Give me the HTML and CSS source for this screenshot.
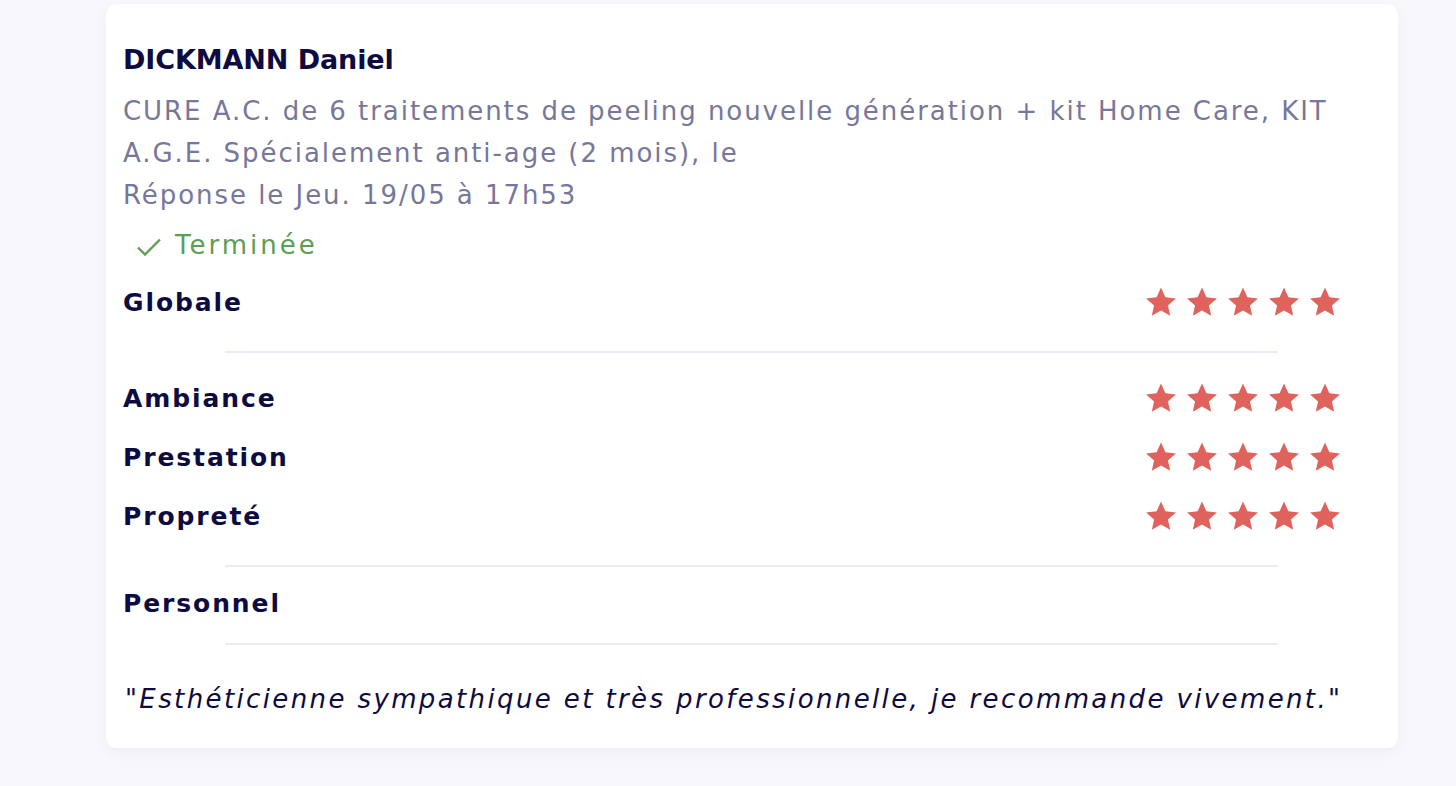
FILE: index.html
```html
<!DOCTYPE html>
<html lang="fr">
<head>
<meta charset="utf-8">
<link rel="stylesheet" href="styles.css">
</head>
<body>
<div class="card">
  <div class="name">DICKMANN Daniel</div>
  <div class="desc">CURE A.C. de 6 traitements de peeling nouvelle génération + kit Home Care, KIT A.G.E. Spécialement anti-age (2 mois), le<br>Réponse le Jeu. 19/05 à 17h53</div>
  <div class="status">
    <svg class="check" width="28" height="28" viewBox="0 0 28 28"><path d="M3 14.5 L10 21.5 L25 6.5" fill="none" stroke="#5c9e53" stroke-width="2.4"/></svg>
    <span>Terminée</span>
  </div>
  <div class="row row-global">
    <span class="label">Globale</span>
    <span class="stars">
      <svg viewBox="0 0 24 24"><path d="M12 1.2l3.3 7.3 7.9.8-6 5.3 1.7 7.8L12 18.4 5.1 22.4l1.7-7.8-6-5.3 7.9-.8z"/></svg>
      <svg viewBox="0 0 24 24"><path d="M12 1.2l3.3 7.3 7.9.8-6 5.3 1.7 7.8L12 18.4 5.1 22.4l1.7-7.8-6-5.3 7.9-.8z"/></svg>
      <svg viewBox="0 0 24 24"><path d="M12 1.2l3.3 7.3 7.9.8-6 5.3 1.7 7.8L12 18.4 5.1 22.4l1.7-7.8-6-5.3 7.9-.8z"/></svg>
      <svg viewBox="0 0 24 24"><path d="M12 1.2l3.3 7.3 7.9.8-6 5.3 1.7 7.8L12 18.4 5.1 22.4l1.7-7.8-6-5.3 7.9-.8z"/></svg>
      <svg viewBox="0 0 24 24"><path d="M12 1.2l3.3 7.3 7.9.8-6 5.3 1.7 7.8L12 18.4 5.1 22.4l1.7-7.8-6-5.3 7.9-.8z"/></svg>
    </span>
  </div>
  <hr class="divider div-1">
  <div class="row">
    <span class="label">Ambiance</span>
    <span class="stars">
      <svg viewBox="0 0 24 24"><path d="M12 1.2l3.3 7.3 7.9.8-6 5.3 1.7 7.8L12 18.4 5.1 22.4l1.7-7.8-6-5.3 7.9-.8z"/></svg>
      <svg viewBox="0 0 24 24"><path d="M12 1.2l3.3 7.3 7.9.8-6 5.3 1.7 7.8L12 18.4 5.1 22.4l1.7-7.8-6-5.3 7.9-.8z"/></svg>
      <svg viewBox="0 0 24 24"><path d="M12 1.2l3.3 7.3 7.9.8-6 5.3 1.7 7.8L12 18.4 5.1 22.4l1.7-7.8-6-5.3 7.9-.8z"/></svg>
      <svg viewBox="0 0 24 24"><path d="M12 1.2l3.3 7.3 7.9.8-6 5.3 1.7 7.8L12 18.4 5.1 22.4l1.7-7.8-6-5.3 7.9-.8z"/></svg>
      <svg viewBox="0 0 24 24"><path d="M12 1.2l3.3 7.3 7.9.8-6 5.3 1.7 7.8L12 18.4 5.1 22.4l1.7-7.8-6-5.3 7.9-.8z"/></svg>
    </span>
  </div>
  <div class="row">
    <span class="label">Prestation</span>
    <span class="stars">
      <svg viewBox="0 0 24 24"><path d="M12 1.2l3.3 7.3 7.9.8-6 5.3 1.7 7.8L12 18.4 5.1 22.4l1.7-7.8-6-5.3 7.9-.8z"/></svg>
      <svg viewBox="0 0 24 24"><path d="M12 1.2l3.3 7.3 7.9.8-6 5.3 1.7 7.8L12 18.4 5.1 22.4l1.7-7.8-6-5.3 7.9-.8z"/></svg>
      <svg viewBox="0 0 24 24"><path d="M12 1.2l3.3 7.3 7.9.8-6 5.3 1.7 7.8L12 18.4 5.1 22.4l1.7-7.8-6-5.3 7.9-.8z"/></svg>
      <svg viewBox="0 0 24 24"><path d="M12 1.2l3.3 7.3 7.9.8-6 5.3 1.7 7.8L12 18.4 5.1 22.4l1.7-7.8-6-5.3 7.9-.8z"/></svg>
      <svg viewBox="0 0 24 24"><path d="M12 1.2l3.3 7.3 7.9.8-6 5.3 1.7 7.8L12 18.4 5.1 22.4l1.7-7.8-6-5.3 7.9-.8z"/></svg>
    </span>
  </div>
  <div class="row">
    <span class="label">Propreté</span>
    <span class="stars">
      <svg viewBox="0 0 24 24"><path d="M12 1.2l3.3 7.3 7.9.8-6 5.3 1.7 7.8L12 18.4 5.1 22.4l1.7-7.8-6-5.3 7.9-.8z"/></svg>
      <svg viewBox="0 0 24 24"><path d="M12 1.2l3.3 7.3 7.9.8-6 5.3 1.7 7.8L12 18.4 5.1 22.4l1.7-7.8-6-5.3 7.9-.8z"/></svg>
      <svg viewBox="0 0 24 24"><path d="M12 1.2l3.3 7.3 7.9.8-6 5.3 1.7 7.8L12 18.4 5.1 22.4l1.7-7.8-6-5.3 7.9-.8z"/></svg>
      <svg viewBox="0 0 24 24"><path d="M12 1.2l3.3 7.3 7.9.8-6 5.3 1.7 7.8L12 18.4 5.1 22.4l1.7-7.8-6-5.3 7.9-.8z"/></svg>
      <svg viewBox="0 0 24 24"><path d="M12 1.2l3.3 7.3 7.9.8-6 5.3 1.7 7.8L12 18.4 5.1 22.4l1.7-7.8-6-5.3 7.9-.8z"/></svg>
    </span>
  </div>
  <hr class="divider div-2">
  <div class="row">
    <span class="label">Personnel</span>
  </div>
  <hr class="divider div-3">
  <p class="quote">"Esthéticienne sympathique et très professionnelle, je recommande vivement."</p>
</div>
</body>
</html>
```

FILE: styles.css
```css
* { box-sizing: border-box; }
html, body { margin: 0; padding: 0; }
body {
  background: #f7f7fc;
  font-family: "DejaVu Sans", "Open Sans", sans-serif;
  width: 1456px;
  height: 786px;
  overflow: hidden;
}
.card {
  margin: 4px 0 0 106px;
  width: 1292px;
  height: 744px;
  background: #ffffff;
  border-radius: 10px;
  box-shadow: 0 4px 16px rgba(30, 30, 90, 0.04);
  padding: 35px 57px 0 17px;
  display: flex;
  flex-direction: column;
}
.card > * { flex-shrink: 0; }
.name {
  font-size: 27px;
  font-weight: 700;
  color: #0d0b3f;
  letter-spacing: -0.1px;
  line-height: 42px;
}
.desc {
  margin-top: 9px;
  font-size: 26px;
  color: #77779a;
  letter-spacing: 1.95px;
  line-height: 42px;
}
.status {
  display: flex;
  align-items: center;
  margin: 9px 0 0 12px;
  color: #5c9e53;
  font-size: 26px;
  letter-spacing: 3px;
  line-height: 40px;
  gap: 12px;
}
.check { display: block; margin-top: 4px; }
.row {
  display: flex;
  justify-content: space-between;
  align-items: center;
  height: 40px;
  margin-top: 19px;
}
.row-global { margin-top: 17px; }
.label {
  font-size: 25px;
  font-weight: 700;
  color: #0d0b3f;
  letter-spacing: 1.9px;
}
.stars {
  display: flex;
  gap: 9px;
}
.stars svg {
  width: 32px;
  height: 32px;
  fill: #e0625c;
  display: block;
}
.divider {
  border: 0;
  height: 2px;
  background: #ebebf6;
  margin: 0 63px 0 102px;
}
.div-1 { margin-top: 29px; margin-bottom: 6px; }
.div-2 { margin-top: 29px; margin-bottom: -3px; }
.div-3 { margin-top: 20px; }
.quote {
  margin: 34px 0 0 2px;
  font-size: 26px;
  font-style: italic;
  color: #0d0b3f;
  letter-spacing: 2.38px;
  line-height: 40px;
  white-space: nowrap;
}
```
